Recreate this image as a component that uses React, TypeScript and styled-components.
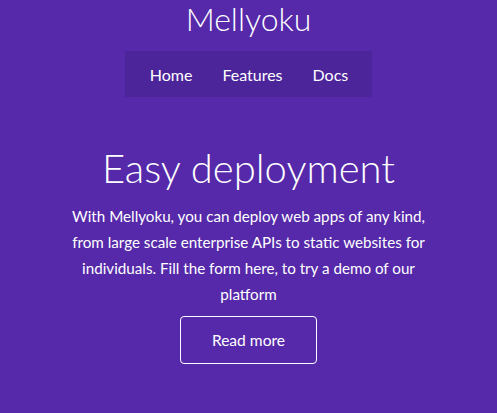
import React from "react";
import styled, { createGlobalStyle } from "styled-components";

const Global = createGlobalStyle`
  html, body { margin: 0; padding: 0; background: #5529a9; }
  body { font-family: Lato, "Open Sans", sans-serif; color: #fff; }
`;

const Page = styled.div`
  min-height: 413px;
  background: #5529a9;
  display: flex;
  flex-direction: column;
  align-items: center;
`;

const Brand = styled.h1`
  margin: 0;
  padding-top: 1px;
  font-size: 32px;
  font-weight: 300;
  line-height: 35px;
`;

const Nav = styled.nav`
  margin-top: 15px;
  background: #4c259a;
  display: flex;
  gap: 30px;
  padding: 0 24px 0 25px;
  height: 46px;
  align-items: center;
`;

const NavLink = styled.a`
  color: #fff;
  font-size: 16px;
  text-decoration: none;
`;

const Hero = styled.section`
  margin-top: 47px;
  width: 372px;
  display: flex;
  flex-direction: column;
  align-items: center;
  text-align: center;
`;

const Title = styled.h2`
  margin: 0;
  font-size: 40px;
  font-weight: 300;
  line-height: 48px;
`;

const Text = styled.p`
  margin: 11px 0 0;
  font-size: 15.2px;
  line-height: 26px;
`;

const Button = styled.button`
  margin-top: 9px;
  width: 137px;
  height: 48px;
  background: transparent;
  border: 1px solid #fff;
  border-radius: 4px;
  color: #fff;
  font-family: inherit;
  font-size: 15.6px;
  cursor: pointer;
`;

export default function App() {
  return (
    <Page>
      <Global />
      <Brand>Mellyoku</Brand>
      <Nav>
        <NavLink href="#">Home</NavLink>
        <NavLink href="#">Features</NavLink>
        <NavLink href="#">Docs</NavLink>
      </Nav>
      <Hero>
        <Title>Easy deployment</Title>
        <Text>
          With Mellyoku, you can deploy web apps of any kind, from large scale
          enterprise APIs to static websites for individuals. Fill the form
          here, to try a demo of our platform
        </Text>
        <Button>Read more</Button>
      </Hero>
    </Page>
  );
}
